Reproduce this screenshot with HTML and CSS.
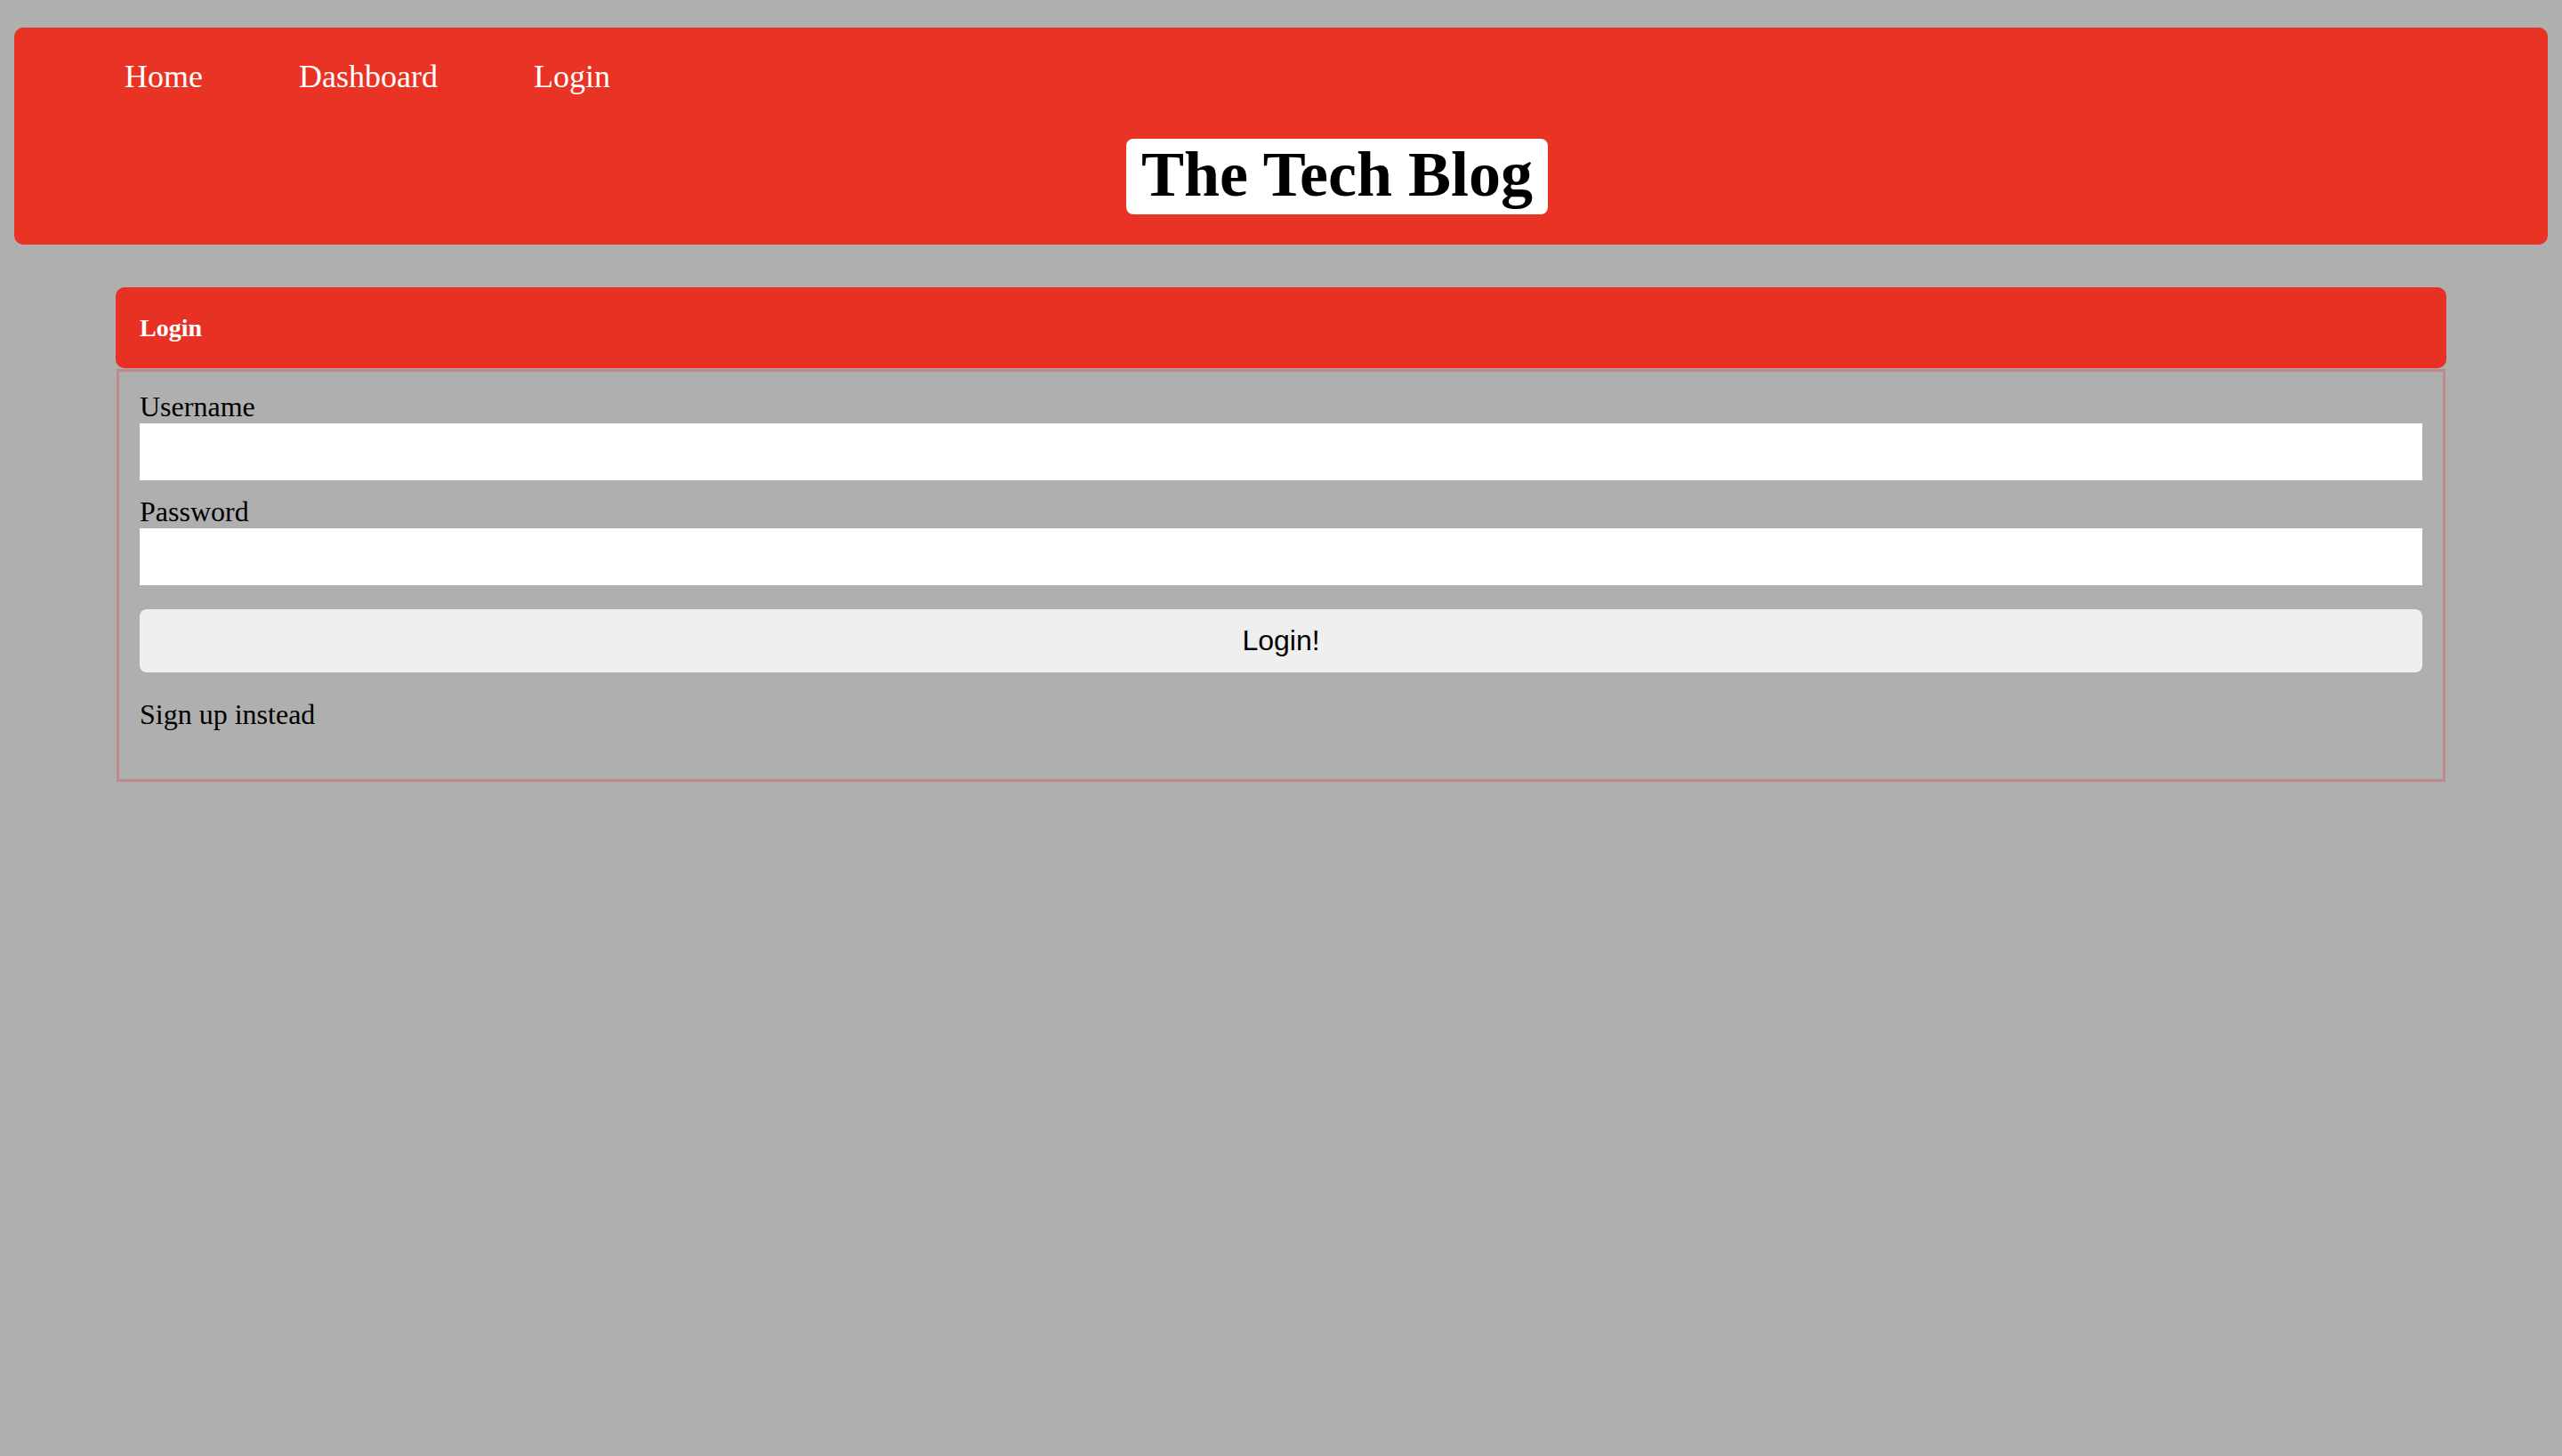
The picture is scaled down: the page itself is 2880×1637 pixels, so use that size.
FILE: index.html
```html
<!DOCTYPE html>
<html lang="en">
<head>
<meta charset="utf-8">
<title>The Tech Blog</title>
<link rel="stylesheet" href="styles.css">
</head>
<body>
<header class="site-header">
  <nav class="nav">
    <a class="nav-link" href="#">Home</a>
    <a class="nav-link" href="#">Dashboard</a>
    <a class="nav-link" href="#">Login</a>
  </nav>
  <div class="brand-row">
    <h1 class="brand">The Tech Blog</h1>
  </div>
</header>
<main class="card">
  <div class="card-header">Login</div>
  <form class="card-body">
    <label class="field-label" for="username">Username</label>
    <input class="field-input" id="username" type="text">
    <label class="field-label field-label-gap" for="password">Password</label>
    <input class="field-input" id="password" type="password">
    <button class="submit-btn" type="button">Login!</button>
    <p class="alt-link">Sign up instead</p>
  </form>
</main>
</body>
</html>
```

FILE: styles.css
```css
html, body {
  background: #afafaf;
}
body {
  margin: 16px;
  font-family: "Liberation Serif", "Times New Roman", serif;
  color: #000;
}
.site-header {
  margin-top: 15px;
  background: #e93325;
  border-radius: 10px;
  padding: 35px 0 34px;
}
.nav {
  display: flex;
  gap: 108px;
  padding-left: 124px;
  height: 41px;
  line-height: 41px;
}
.nav-link {
  color: #fff;
  text-decoration: none;
  font-size: 36px;
}
.brand-row {
  display: flex;
  justify-content: center;
  padding-left: 126px;
  margin-top: 49px;
}
.brand {
  margin: 0;
  background: #fff;
  border-radius: 8px;
  font-size: 72px;
  font-weight: bold;
  line-height: 80px;
  padding: 0 17px 5px;
}
.card {
  display: block;
  margin: 48px 114px 0;
}
.card-header {
  height: 91px;
  display: flex;
  align-items: center;
  padding-left: 27px;
  background: #e63124;
  border-radius: 10px;
  color: #fff;
  font-weight: bold;
  font-size: 28px;
}
.card-body {
  display: block;
  border: 3px solid #c08888;
  margin: 1px 1px 0;
  padding: 21px 23px 54px;
}
.field-label {
  display: block;
  font-size: 32px;
  line-height: 37px;
}
.field-label-gap {
  margin-top: 17px;
}
.field-input {
  display: block;
  box-sizing: border-box;
  width: 100%;
  height: 64px;
  margin: 0;
  padding: 0 8px;
  border: none;
  background: #fff;
  font-size: 28px;
}
.submit-btn {
  display: flex;
  align-items: center;
  justify-content: center;
  box-sizing: border-box;
  width: 100%;
  height: 71px;
  margin-top: 27px;
  padding: 0;
  border: none;
  border-radius: 8px;
  background: #efefef;
  color: #000;
  font-family: "Liberation Sans", Arial, sans-serif;
  font-size: 32px;
}
.alt-link {
  margin: 29px 0 0;
  font-size: 32px;
  line-height: 37px;
}
```
